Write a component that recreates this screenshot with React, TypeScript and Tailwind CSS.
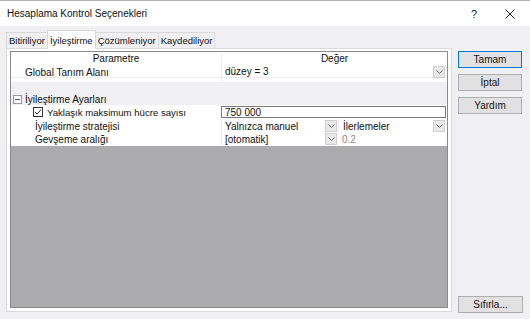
import React from 'react';

const Chevron: React.FC = () => (
  <svg width="7" height="4" viewBox="0 0 7 4" fill="none">
    <polyline points="0.5,0.5 3.5,3.5 6.5,0.5" stroke="#606060" strokeWidth="1" />
  </svg>
);

const DropBtn: React.FC<{ className?: string }> = ({ className = '' }) => (
  <div
    className={`w-[12px] h-[12px] shrink-0 flex items-center justify-center bg-[#e9e9e9] border border-[#cfcfcf] ${className}`}
  >
    <Chevron />
  </div>
);

const Btn: React.FC<{ label: string; primary?: boolean }> = ({ label, primary }) => (
  <div
    className={`w-[64px] h-[17px] flex items-center justify-center bg-[#e1e1e1] border ${
      primary ? 'border-[#0078d7]' : 'border-[#adadad]'
    }`}
  >
    {label}
  </div>
);

const tabs = ['Bitiriliyor', 'İyileştirme', 'Çözümleniyor', 'Kaydediliyor'];

export default function App() {
  return (
    <div className="w-[530px] h-[319px] bg-[#f0eff1] border-t border-[#b4b4b4] flex flex-col overflow-hidden font-['Liberation_Sans',Arial,sans-serif] text-[10px] leading-[12px] text-[#111]">
      {/* title bar */}
      <div className="h-[25px] bg-white flex items-center pl-[7px] pr-[15px]">
        <span className="text-[10px] pt-[1px]">Hesaplama Kontrol Seçenekleri</span>
        <span className="ml-auto mr-[28px] text-[11px] text-[#222]">?</span>
        <svg width="10" height="10" viewBox="0 0 10 10">
          <line x1="0.5" y1="0.5" x2="9.5" y2="9.5" stroke="#222" strokeWidth="1" />
          <line x1="9.5" y1="0.5" x2="0.5" y2="9.5" stroke="#222" strokeWidth="1" />
        </svg>
      </div>

      <div className="flex flex-1 pt-[4px] pl-[6px]">
        {/* left: tabs + panel */}
        <div className="w-[446px] flex flex-col">
          <div className="h-[18px] flex items-end text-[9.5px]">
            {tabs.map((t, i) =>
              i === 1 ? (
                <div
                  key={t}
                  className="relative z-10 -mb-px -ml-px h-[19px] px-[2px] pt-[1px] flex items-center bg-white border border-b-0 border-[#d9d9d9]"
                >
                  {t}
                </div>
              ) : (
                <div
                  key={t}
                  className="h-[16px] px-[2px] pt-[1px] flex items-center bg-[#f0eff1] border border-b-0 border-[#d9d9d9] -ml-px first:ml-0"
                >
                  {t}
                </div>
              )
            )}
          </div>

          <div className="h-[264px] bg-white border border-[#d9d9d9] pt-[2px] px-[3px]">
            <div className="h-[257px] border border-[#8a8a8a] flex flex-col">
              {/* header */}
              <div className="h-[13px] flex bg-white pt-[1px]">
                <div className="w-[210px] text-center">Parametre</div>
                <div className="flex-1 text-center border-l border-[#ececec]">Değer</div>
              </div>
              {/* global */}
              <div className="h-[13px] flex bg-white border-b border-[#ececec]">
                <div className="w-[210px] pl-[14px] pt-[2px]">Global Tanım Alanı</div>
                <div className="flex-1 flex items-center border-l border-[#ececec] pl-[3px] pr-[2px]">
                  <span className="pt-[2px]">düzey = 3</span>
                  <DropBtn className="ml-auto mt-[2px]" />
                </div>
              </div>
              <div className="h-[4px] flex bg-white">
                <div className="w-[210px]" />
                <div className="flex-1 border-l border-[#ececec]" />
              </div>
              {/* group band */}
              <div className="h-[23px] bg-[#f0eff1] flex items-end pl-[2px]">
                <div className="flex items-center h-[12px]">
                  <svg width="9" height="9" viewBox="0 0 9 9" className="mr-[3px]">
                    <rect x="0.5" y="0.5" width="8" height="8" fill="#fff" stroke="#9a9a9a" />
                    <line x1="2" y1="4.5" x2="7" y2="4.5" stroke="#555" />
                  </svg>
                  <span className="pt-[1px]">İyileştirme Ayarları</span>
                </div>
              </div>
              {/* rows */}
              <div className="h-[14px] flex bg-white items-center">
                <div className="w-[210px] flex items-center pl-[22px]">
                  <svg width="10" height="10" viewBox="0 0 10 10" className="mr-[4px]">
                    <rect x="0.5" y="0.5" width="9" height="9" fill="#fff" stroke="#333" />
                    <polyline points="2,5 4,7.2 8,2.6" fill="none" stroke="#222" strokeWidth="1" />
                  </svg>
                  <span className="text-[9.6px] pt-[1px]">Yaklaşık maksimum hücre sayısı</span>
                </div>
                <div className="flex-1 h-[12px] mr-[1px] border border-[#7a7a7a] pl-[3px] pt-[1px] flex items-center">
                  750 000
                </div>
              </div>
              <div className="h-[13px] flex bg-white">
                <div className="w-[210px] pl-[24px] pt-[2px]">İyileştirme stratejisi</div>
                <div className="flex-1 flex items-center border-l border-[#ececec] pr-[2px]">
                  <span className="w-[103px] pl-[3px] pt-[2px]">Yalnızca manuel</span>
                  <DropBtn />
                  <span className="pl-[4px] pt-[2px] border-l border-[#ececec] ml-[1px]">İlerlemeler</span>
                  <DropBtn className="ml-auto" />
                </div>
              </div>
              <div className="h-[14px] flex bg-white">
                <div className="w-[210px] pl-[24px] pt-[2px]">Gevşeme aralığı</div>
                <div className="flex-1 flex items-center border-l border-[#ececec]">
                  <span className="w-[103px] pl-[3px] pt-[2px]">[otomatik]</span>
                  <DropBtn />
                  <span className="pl-[4px] pt-[2px] ml-[1px] text-[#8a8a8a]">0.2</span>
                </div>
              </div>
              <div className="flex-1 bg-[#abaaac]" />
            </div>
          </div>
        </div>

        {/* right: buttons */}
        <div className="ml-[6px] pt-[21px] pb-[6px] flex flex-col gap-[6px]">
          <Btn label="Tamam" primary />
          <Btn label="İptal" />
          <Btn label="Yardım" />
          <div className="mt-auto">
            <div className="w-[65px] h-[17px] flex items-center justify-center bg-[#e1e1e1] border border-[#adadad]">
              Sıfırla...
            </div>
          </div>
        </div>
      </div>
    </div>
  );
}
